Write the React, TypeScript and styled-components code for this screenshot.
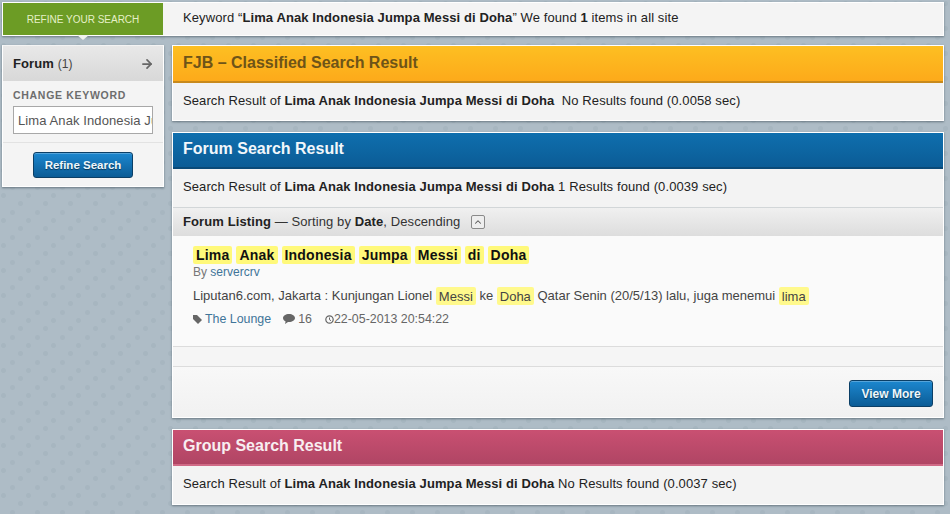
import { createGlobalStyle, styled } from "styled-components";
import { ArrowRight, ChevronUp } from "lucide-react";

const GlobalStyle = createGlobalStyle`
    html, body {
        margin: 0;
        padding: 0;
        height: 100%;
    }
    body {
        background-color: #aebcc6;
        background-image:
            radial-gradient(circle at 3.5px 20.5px, #a7b6c0 0 2px, transparent 3px),
            radial-gradient(circle at 20.5px 3.5px, #a7b6c0 0 2px, transparent 3px),
            radial-gradient(circle at 12.5px 12.5px, #a7b6c0 0 2px, transparent 3px);
        background-size: 25px 25px;
        font-family: "Liberation Sans", Arial, sans-serif;
        font-size: 13px;
        letter-spacing: 0.1px;
        color: #333;
        overflow: hidden;
    }
`;

const Page = styled.div`
    width: 950px;
    height: 514px;
    padding: 2px 6px 0 2px;
    box-sizing: border-box;
    display: flex;
    flex-direction: column;
    gap: 9px;
`;

const TopBar = styled.div`
    height: 32px;
    display: flex;
    background: #f4f4f4;
    border: 1px solid #fff;
    box-shadow: 0 1px 2px rgba(60, 75, 85, 0.6);
`;

const RefineTab = styled.div`
    position: relative;
    width: 160px;
    height: 100%;
    background: #6c9c25;
    color: #e6f0c8;
    font-size: 10px;
    letter-spacing: 0;
    display: flex;
    align-items: center;
    justify-content: center;
    &::after {
        content: "";
        position: absolute;
        left: 74px;
        top: 100%;
        border: 6px solid transparent;
        border-top: 5px solid #f0f2ee;
        border-bottom: 0;
    }
`;

const KeywordLine = styled.div`
    padding-left: 20px;
    line-height: 30px;
    color: #222;
`;

const Columns = styled.div`
    display: flex;
    gap: 8px;
    align-items: flex-start;
`;

const Sidebar = styled.aside`
    width: 162px;
    flex: none;
    background: #f4f4f4;
    border: 1px solid #fff;
    border-top: 1px solid #f4f4f4;
    box-sizing: border-box;
    box-shadow: 0 1px 2px rgba(60, 75, 85, 0.6);
    height: 142px;
`;

const SideHead = styled.div`
    height: 35px;
    padding: 0 9px 0 10px;
    background: linear-gradient(#e8e8e8, #d8d8d8);
    display: flex;
    align-items: center;
    justify-content: space-between;
    font-size: 13px;
    color: #222;
    & b {
        font-weight: 700;
    }
    & span {
        font-size: 12px;
        color: #444;
    }
`;

const SideSection = styled.div`
    padding: 8px 10px 0 10px;
    height: 62px;
    box-sizing: border-box;
    border-bottom: 1px solid #e2e2e2;
`;

const SideLabel = styled.div`
    font-size: 10.5px;
    font-weight: 700;
    letter-spacing: 0.7px;
    color: #6d6d6d;
    line-height: 12px;
    margin-bottom: 5px;
`;

const KeywordInput = styled.input`
    display: block;
    width: 140px;
    height: 28px;
    box-sizing: border-box;
    border: 1px solid #a8a8a8;
    background: #fff;
    padding: 0 0 0 4px;
    font: 13px "Liberation Sans", Arial, sans-serif;
    letter-spacing: 0.1px;
    color: #555;
    outline: none;
`;

const SideAction = styled.div`
    display: flex;
    justify-content: center;
    padding-top: 9px;
`;

const BlueButton = styled.button<{ $w: number; $h: number; $size: number }>`
    width: ${(p) => p.$w}px;
    height: ${(p) => p.$h}px;
    padding: 0;
    border: 1px solid #0b3f66;
    border-radius: 3px;
    background: linear-gradient(#1c87cf, #0b5c96);
    box-shadow: inset 0 1px 0 rgba(255, 255, 255, 0.25);
    color: #eef7fc;
    font: 700 ${(p) => p.$size}px "Liberation Sans", Arial, sans-serif;
    text-shadow: 0 1px 1px rgba(0, 0, 0, 0.5);
`;

const Main = styled.main`
    flex: 1;
    display: flex;
    flex-direction: column;
    gap: 11px;
`;

const Panel = styled.section`
    background: #f3f3f3;
    border: 1px solid #fff;
    box-shadow: 0 1px 2px rgba(60, 75, 85, 0.6);
`;

const tones = {
    orange: { from: "#fdbf22", to: "#fdaa1a", line: "#c88a1c", text: "#6e5418", h: 37, lh: 33 },
    blue: { from: "#0f6fae", to: "#0b5c96", line: "#0a4a78", text: "#f2f7fb", h: 36, lh: 31 },
    pink: { from: "#c95072", to: "#b04564", line: "#d06a86", text: "#f8eef1", h: 36, lh: 31 },
};

const PanelHead = styled.h2<{ $tone: keyof typeof tones }>`
    margin: 0;
    height: ${(p) => tones[p.$tone].h}px;
    box-sizing: border-box;
    padding: 0 10px;
    background: linear-gradient(${(p) => tones[p.$tone].from}, ${(p) => tones[p.$tone].to});
    border-bottom: 2px solid ${(p) => tones[p.$tone].line};
    color: ${(p) => tones[p.$tone].text};
    font-size: 16px;
    font-weight: 700;
    letter-spacing: 0;
    line-height: ${(p) => tones[p.$tone].lh}px;
`;

const ResultLine = styled.div<{ $h?: number }>`
    height: ${(p) => p.$h ?? 38}px;
    padding-left: 10px;
    line-height: 35px;
    color: #222;
    white-space: pre;
`;

const ListingBar = styled.div`
    height: 29px;
    box-sizing: border-box;
    padding: 0 0 1px 10px;
    display: flex;
    align-items: center;
    gap: 11px;
    background: linear-gradient(#f0f0f0, #dddddd);
    border-top: 1px solid #d2d6d8;
    color: #333;
    & b {
        color: #222;
    }
`;

const Collapse = styled.span`
    width: 14px;
    height: 14px;
    box-sizing: border-box;
    border: 1px solid #8a8a8a;
    border-radius: 2px;
    background: #eee;
    color: #555;
    display: flex;
    align-items: center;
    justify-content: center;
`;

const Listing = styled.div`
    height: 111px;
    box-sizing: border-box;
    padding: 10px 20px 0;
    background: #fafafa;
    border-bottom: 1px solid #dcdcdc;
`;

const ThreadTitle = styled.div`
    display: flex;
    gap: 4px;
    height: 18px;
    font-size: 14px;
    font-weight: 700;
    line-height: 18px;
    color: #111;
    letter-spacing: 0.2px;
`;

const Hit = styled.span`
    background: #fff97a;
    border-radius: 2px;
    padding: 0 3px;
`;

const ThreadBy = styled.div`
    font-size: 12px;
    letter-spacing: 0;
    line-height: 15px;
    margin-top: 1px;
    color: #777;
`;

const UserLink = styled.a`
    color: #3f7599;
`;

const Excerpt = styled.div`
    margin-top: 7px;
    line-height: 18px;
    letter-spacing: 0;
    color: #444;
    & mark {
        background: #fff98c;
        color: #444;
        border-radius: 2px;
        padding: 1.5px 3px;
    }
`;

const Meta = styled.div`
    margin-top: 6px;
    display: flex;
    align-items: center;
    font-size: 12.4px;
    letter-spacing: 0;
    line-height: 16px;
    color: #666;
`;

const MetaItem = styled.span<{ $gap?: number }>`
    display: inline-flex;
    align-items: center;
    gap: 3px;
    margin-right: ${(p) => p.$gap ?? 0}px;
`;

const Spacer = styled.div`
    height: 19px;
    background: #f5f5f5;
    border-bottom: 1px solid #dcdcdc;
`;

const PanelFoot = styled.div`
    height: 50px;
    box-sizing: border-box;
    padding: 13px 10px 0 0;
    display: flex;
    justify-content: flex-end;
    background: linear-gradient(#f8f8f8, #f1f1f1);
`;

const Term = () => <b>Lima Anak Indonesia Jumpa Messi di Doha</b>;

export default function App() {
    return (
        <>
            <GlobalStyle />
            <Page>
                <TopBar>
                    <RefineTab>REFINE YOUR SEARCH</RefineTab>
                    <KeywordLine>
                        Keyword “<Term />” We found <b>1</b> items in all site
                    </KeywordLine>
                </TopBar>
                <Columns>
                    <Sidebar>
                        <SideHead>
                            <div>
                                <b>Forum</b> <span>(1)</span>
                            </div>
                            <ArrowRight size={14} color="#666" strokeWidth={3} />
                        </SideHead>
                        <SideSection>
                            <SideLabel>CHANGE KEYWORD</SideLabel>
                            <KeywordInput readOnly value="Lima Anak Indonesia Jumpa Messi di Doha" />
                        </SideSection>
                        <SideAction>
                            <BlueButton $w={100} $h={26} $size={11.5}>Refine Search</BlueButton>
                        </SideAction>
                    </Sidebar>
                    <Main>
                        <Panel>
                            <PanelHead $tone="orange">FJB – Classified Search Result</PanelHead>
                            <ResultLine $h={37}>
                                Search Result of <Term />  No Results found (0.0058 sec)
                            </ResultLine>
                        </Panel>
                        <Panel>
                            <PanelHead $tone="blue">Forum Search Result</PanelHead>
                            <ResultLine>
                                Search Result of <Term /> 1 Results found (0.0039 sec)
                            </ResultLine>
                            <ListingBar>
                                <span>
                                    <b>Forum Listing</b> — Sorting by <b>Date</b>, Descending
                                </span>
                                <Collapse>
                                    <ChevronUp size={10} strokeWidth={2.5} />
                                </Collapse>
                            </ListingBar>
                            <Listing>
                                <ThreadTitle>
                                    {["Lima", "Anak", "Indonesia", "Jumpa", "Messi", "di", "Doha"].map((w) => (
                                        <Hit key={w}>{w}</Hit>
                                    ))}
                                </ThreadTitle>
                                <ThreadBy>
                                    By <UserLink>servercrv</UserLink>
                                </ThreadBy>
                                <Excerpt>
                                    Liputan6.com, Jakarta : Kunjungan Lionel <mark>Messi</mark> ke <mark>Doha</mark> Qatar Senin (20/5/13) lalu, juga menemui <mark>lima</mark>
                                </Excerpt>
                                <Meta>
                                    <MetaItem $gap={12}>
                                        <svg width="9" height="9" viewBox="0 0 9 9">
                                            <path d="M0 0h4l5 5-4 4-5-5z" fill="#666" />
                                        </svg>
                                        <UserLink>The Lounge</UserLink>
                                    </MetaItem>
                                    <MetaItem $gap={13}>
                                        <svg width="12" height="10" viewBox="0 0 12 10">
                                            <path d="M6 0c3.3 0 6 1.8 6 4s-2.700 4-6 4l-1 0-3 2 .6-2.600C1 6.700 0 5.400 0 4c0-2.200 2.700-4 6-4z" fill="#666" />
                                        </svg>
                                        16
                                    </MetaItem>
                                    <MetaItem>
                                        <svg width="9" height="9" viewBox="0 0 9 9" style={{ marginRight: -3 }}>
                                            <circle cx="4.500" cy="4.500" r="3.700" fill="none" stroke="#666" strokeWidth="1.200" />
                                            <path d="M4.500 2.500v2.200l1.500 1" fill="none" stroke="#666" />
                                        </svg>
                                        22-05-2013 20:54:22
                                    </MetaItem>
                                </Meta>
                            </Listing>
                            <Spacer />
                            <PanelFoot>
                                <BlueButton $w={84} $h={27} $size={12}>View More</BlueButton>
                            </PanelFoot>
                        </Panel>
                        <Panel>
                            <PanelHead $tone="pink">Group Search Result</PanelHead>
                            <ResultLine>
                                Search Result of <Term /> No Results found (0.0037 sec)
                            </ResultLine>
                        </Panel>
                    </Main>
                </Columns>
            </Page>
        </>
    );
}
